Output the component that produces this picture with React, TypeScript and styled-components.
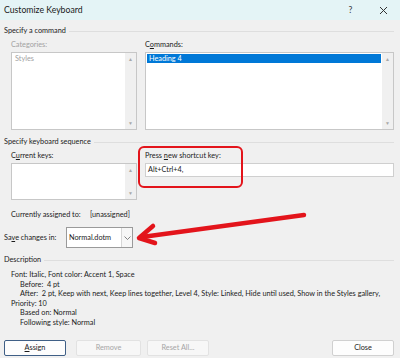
import styled, { createGlobalStyle } from 'styled-components';

const GlobalStyle = createGlobalStyle`
  html, body {
    margin: 0;
    padding: 0;
    background: #f0f0f0;
  }
  * {
    box-sizing: border-box;
  }
`;

const Window = styled.div`
  position: relative;
  width: 400px;
  height: 358px;
  overflow: hidden;
  background: #f0f0f0;
  font-family: Lato, 'Open Sans', sans-serif;
  font-size: 7.3px;
  line-height: 10px;
  color: #1b1b1b;
`;

const TitleBar = styled.div`
  height: 20px;
  display: flex;
  align-items: center;
  padding-left: 4px;
  background: #e4f4f6;
  font-size: 8.7px;
  color: #1a1a1a;
  & > .title {
    flex: 1;
  }
  & > .icon {
    width: 33px;
    display: flex;
    justify-content: center;
    align-items: center;
    color: #333;
  }
`;

const Body = styled.div`
  padding: 0 6px 0 4px;
`;

const GroupHeader = styled.div<{ $top: number }>`
  display: flex;
  align-items: center;
  gap: 3px;
  height: 10px;
  margin-top: ${(p) => p.$top}px;
  &::after {
    content: '';
    flex: 1;
    height: 1px;
    background: #dedede;
  }
`;

const Columns = styled.div<{ $top: number }>`
  display: grid;
  grid-template-columns: 126px 249px;
  column-gap: 8px;
  padding-left: 7px;
  margin-top: ${(p) => p.$top}px;
`;

const Field = styled.div`
  display: flex;
  flex-direction: column;
  gap: 2px;
`;

const Label = styled.div<{ $disabled?: boolean; $width?: number }>`
  height: 10px;
  flex: none;
  width: ${(p) => (p.$width ? `${p.$width}px` : 'auto')};
  color: ${(p) => (p.$disabled ? '#a2a2a2' : '#1b1b1b')};
  & u {
    text-decoration-thickness: 1px;
    text-underline-offset: 1px;
  }
`;

const ListBox = styled.div<{ $height: number }>`
  height: ${(p) => p.$height}px;
  display: flex;
  background: #fff;
  border: 1px solid #c7c7c7;
`;

const ListItems = styled.div`
  flex: 1;
  padding: 1px;
`;

const ListItem = styled.div<{ $selected?: boolean; $disabled?: boolean }>`
  height: 9px;
  line-height: 9px;
  padding-left: 2px;
  background: ${(p) => (p.$selected ? '#0078d7' : 'transparent')};
  color: ${(p) => (p.$selected ? '#fff' : p.$disabled ? '#a2a2a2' : '#1b1b1b')};
`;

const ScrollBar = styled.div`
  width: 11px;
  display: flex;
  flex-direction: column;
  justify-content: space-between;
  align-items: center;
  padding: 3px 0;
  background: #f0f0f0;
  color: #a8a8a8;
  font-size: 5px;
  line-height: 6px;
`;

const TextInput = styled.div`
  height: 14px;
  display: flex;
  align-items: center;
  padding-left: 2px;
  background: #fff;
  border: 1px solid #cfcfcf;
`;

const InfoRow = styled.div`
  display: flex;
  padding-left: 7px;
  margin-top: 10px;
  height: 10px;
`;

const SaveRow = styled.div`
  display: flex;
  align-items: center;
  margin-top: 7px;
  height: 21px;
`;

const Combo = styled.div`
  width: 67px;
  height: 21px;
  display: flex;
  background: #fff;
  border: 1px solid #9a9a9a;
  & > .value {
    flex: 1;
    display: flex;
    align-items: center;
    padding-left: 2px;
  }
  & > .button {
    width: 11px;
    display: flex;
    align-items: center;
    justify-content: center;
    border-left: 1px solid #d6d6d6;
    background: #f6f6f6;
  }
`;

const Description = styled.div`
  margin-top: 5px;
  padding-left: 7px;
  line-height: 9.6px;
`;

const DescLine = styled.div<{ $indent?: boolean }>`
  padding-left: ${(p) => (p.$indent ? 9 : 0)}px;
  white-space: nowrap;
`;

const ButtonRow = styled.div`
  display: flex;
  align-items: center;
  margin-top: 12px;
`;

const Button = styled.div<{ $width: number; $gap?: number; $variant?: 'default' | 'disabled' | 'normal' }>`
  width: ${(p) => p.$width}px;
  height: 16px;
  margin-left: ${(p) => p.$gap ?? 0}px;
  display: flex;
  align-items: center;
  justify-content: center;
  background: ${(p) => (p.$variant === 'disabled' ? '#f7f7f7' : '#fdfdfd')};
  color: ${(p) => (p.$variant === 'disabled' ? '#a6a6a6' : '#1b1b1b')};
  border: 1px solid
    ${(p) =>
      p.$variant === 'default' ? '#3f5f86' : p.$variant === 'disabled' ? '#e2e2e2' : '#d0d0d0'};
  border-radius: 2px;
`;

const Spacer = styled.div`
  flex: 1;
`;

const Highlight = styled.div`
  position: absolute;
  left: 138px;
  top: 146px;
  width: 105px;
  height: 42px;
  border: 2.5px solid #e3141b;
  border-radius: 6px;
  pointer-events: none;
`;

const ArrowLayer = styled.svg`
  position: absolute;
  left: 0;
  top: 0;
  pointer-events: none;
`;

const Scroll = () => (
  <ScrollBar>
    <span>▲</span>
    <span>▼</span>
  </ScrollBar>
);

const App = () => {
  return (
    <>
      <GlobalStyle />
      <Window>
        <TitleBar>
          <span className="title">Customize Keyboard</span>
          <span className="icon">?</span>
          <span className="icon">
            <svg width="9" height="9" viewBox="0 0 9 9">
              <path d="M1 1L8 8M8 1L1 8" stroke="#333" strokeWidth="1" />
            </svg>
          </span>
        </TitleBar>
        <Body>
          <GroupHeader $top={6}>Specify a command</GroupHeader>
          <Columns $top={4}>
            <Field>
              <Label $disabled>Categories:</Label>
              <ListBox $height={78}>
                <ListItems>
                  <ListItem $disabled>Styles</ListItem>
                </ListItems>
                <Scroll />
              </ListBox>
            </Field>
            <Field>
              <Label>
                C<u>o</u>mmands:
              </Label>
              <ListBox $height={78}>
                <ListItems>
                  <ListItem $selected>Heading 4</ListItem>
                </ListItems>
                <Scroll />
              </ListBox>
            </Field>
          </Columns>

          <GroupHeader $top={7}>Specify keyboard sequence</GroupHeader>
          <Columns $top={4}>
            <Field>
              <Label>
                C<u>u</u>rrent keys:
              </Label>
              <ListBox $height={37}>
                <ListItems />
                <Scroll />
              </ListBox>
            </Field>
            <Field>
              <Label>
                Press <u>n</u>ew shortcut key:
              </Label>
              <TextInput>Alt+Ctrl+4,</TextInput>
            </Field>
          </Columns>

          <InfoRow>
            <Label $width={79}>Currently assigned to:</Label>
            <span>[unassigned]</span>
          </InfoRow>

          <SaveRow>
            <Label $width={62}>
              Sa<u>v</u>e changes in:
            </Label>
            <Combo>
              <span className="value">Normal.dotm</span>
              <span className="button">
                <svg width="7" height="4" viewBox="0 0 7 4">
                  <path d="M0.5 0.5L3.5 3.5L6.5 0.5" fill="none" stroke="#666" strokeWidth="0.8" />
                </svg>
              </span>
            </Combo>
          </SaveRow>

          <GroupHeader $top={7}>Description</GroupHeader>
          <Description>
            <DescLine>Font: Italic, Font color: Accent 1, Space</DescLine>
            <DescLine $indent>Before:&nbsp; 4 pt</DescLine>
            <DescLine $indent>
              After:&nbsp; 2 pt, Keep with next, Keep lines together, Level 4, Style: Linked, Hide until
              used, Show in the Styles gallery,
            </DescLine>
            <DescLine>Priority: 10</DescLine>
            <DescLine $indent>Based on: Normal</DescLine>
            <DescLine $indent>Following style: Normal</DescLine>
          </Description>

          <ButtonRow>
            <Button $width={62} $variant="default">
              <span>
                <u>A</u>ssign
              </span>
            </Button>
            <Button $width={65} $gap={10} $variant="disabled">
              Remove
            </Button>
            <Button $width={62} $gap={6} $variant="disabled">
              Reset All...
            </Button>
            <Spacer />
            <Button $width={62} $variant="normal">
              Close
            </Button>
          </ButtonRow>
        </Body>

        <Highlight />
        <ArrowLayer width="400" height="358" viewBox="0 0 400 358">
          <path d="M304 215L142 237" stroke="#e3141b" strokeWidth="4.5" strokeLinecap="round" />
          <path
            d="M153 226L139 238L155 243"
            fill="none"
            stroke="#e3141b"
            strokeWidth="4.5"
            strokeLinecap="round"
            strokeLinejoin="round"
          />
        </ArrowLayer>
      </Window>
    </>
  );
};

export default App;
